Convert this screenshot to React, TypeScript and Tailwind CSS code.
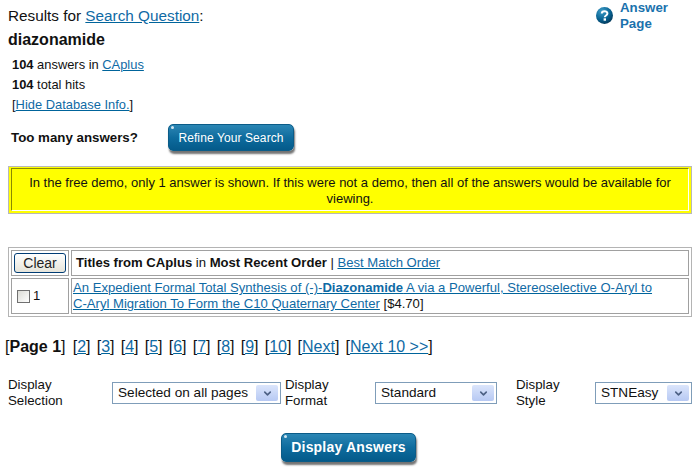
import { ChevronDown } from 'lucide-react'

const linkCls = 'text-[#0f6aa5] underline decoration-[#00649b]'

function GlossyButton({ label, cls }: { label: string; cls: string }) {
  return (
    <div
      className={`relative flex items-center justify-center rounded-[5px] border border-[#0b5c88] bg-gradient-to-b from-[#2a86b4] via-[#0e6c9e] to-[#045a8a] text-white shadow-[1px_3px_2px_rgba(0,0,0,0.55)] ${cls}`}
    >
      <span className="absolute left-[2px] top-[1px] h-[3px] w-[3px] rounded-full bg-white/80" />
      {label}
    </div>
  )
}

function FakeSelect({ value, cls }: { value: string; cls: string }) {
  return (
    <div
      className={`mt-[6px] flex h-[22px] items-center justify-between border border-[#7f9db9] bg-white pl-[5px] pr-[2px] text-[13.6px] text-[#111] ${cls}`}
    >
      <span>{value}</span>
      <span className="flex h-[16px] w-[22px] items-center justify-center rounded-[2px] bg-gradient-to-b from-[#dbe5fb] to-[#b7c9f3]">
        <ChevronDown size={11} strokeWidth={3.5} className="text-[#4d6185]" />
      </span>
    </div>
  )
}

export default function App() {
  return (
    <div className="h-[467px] w-[698px] overflow-hidden bg-white font-['Liberation_Sans',Arial,sans-serif] text-[#111]">
      <div className="flex justify-between pl-2 pr-[10px]">
        <div className="pt-[6px]">
          <div className="text-[15.3px] leading-[20px]">
            Results for <a className={linkCls}>Search Question</a>:
          </div>
          <div className="mt-[4px] text-[16px] font-bold leading-[20px]">diazonamide</div>
          <div className="mt-[5px] pl-[4px] text-[12.9px] leading-[20px]">
            <div>
              <b>104</b> answers in <a className={linkCls}>CAplus</a>
            </div>
            <div>
              <b>104</b> total hits
            </div>
            <div>
              [<a className={linkCls}>Hide Database Info.</a>]
            </div>
          </div>
        </div>
        <div className="flex w-[92px] items-start gap-[7px]">
          <svg width="17" height="17" viewBox="0 0 17 17" className="mt-[7px] flex-none">
            <defs>
              <radialGradient id="q" cx="35%" cy="25%" r="85%">
                <stop offset="0%" stopColor="#3d9cc8" />
                <stop offset="60%" stopColor="#07608f" />
                <stop offset="100%" stopColor="#03304e" />
              </radialGradient>
            </defs>
            <circle cx="8.5" cy="8.5" r="8.5" fill="url(#q)" />
            <path d="M5.8 6.6c0-3.2 5.6-3.2 5.6-.1 0 2-2.6 1.9-2.6 3.7" fill="none" stroke="#fff" strokeWidth="2" />
            <rect x="7.6" y="11.3" width="2.4" height="2.4" fill="#fff" />
          </svg>
          <div className="text-[13.3px] font-bold leading-[16px] text-[#1b72ad]">
            Answer
            <br />
            Page
          </div>
        </div>
      </div>

      <div className="mt-[9px] flex items-center pl-[11px]">
        <b className="w-[157px] text-[13.3px] leading-[16px]">Too many answers?</b>
        <GlossyButton label="Refine Your Search" cls="h-[27px] w-[126px] text-[12px] tracking-[0.1px]" />
      </div>

      <div className="ml-2 mr-[6px] mt-[15px] border border-[#b8b8b8] bg-[#ffff00] px-[2px] pb-[2px] pt-[1px]">
        <div className="border border-b-white border-l-[#8a8a00] border-r-white border-t-[#8a8a00] px-2 pb-[3px] pt-[6px] text-center text-[13px] leading-[16px] text-[#111]">
          In the free demo, only 1 answer is shown. If this were not a demo, then all of the answers would be available for viewing.
        </div>
      </div>

      <div className="ml-2 mr-[6px] mt-[33px] grid grid-cols-[58px_1fr] gap-[2px] border border-[#b4b4b4] p-[2px] text-[13.1px]">
        <div className="flex h-[26px] items-center justify-center border border-[#a0a0a0]">
          <div className="flex h-[20px] w-[52px] items-center justify-center rounded-[3px] border border-[#003c74] bg-gradient-to-b from-white to-[#e6e4da] text-[14px] text-[#222]">
            Clear
          </div>
        </div>
        <div className="flex h-[26px] items-center border border-[#a0a0a0] pl-[4px]">
          <span>
            <b>Titles from CAplus</b> in <b>Most Recent Order</b> | <a className={linkCls}>Best Match Order</a>
          </span>
        </div>
        <div className="flex h-[36px] items-center border border-[#a0a0a0] pl-[5px]">
          <span className="mr-[3px] h-[13px] w-[13px] border border-[#707070] bg-gradient-to-br from-[#dcdcd6] to-white" />
          1
        </div>
        <div className="flex h-[36px] items-center border border-[#a0a0a0] pl-[1px] leading-[16px]">
          <span>
            <a className={linkCls}>
              An Expedient Formal Total Synthesis of (-)-<b>Diazonamide</b> A via a Powerful, Stereoselective O-Aryl to{' '}
              <span className="whitespace-nowrap">C-Aryl</span> Migration To Form the C10 Quaternary Center
            </a>{' '}
            [$4.70]
          </span>
        </div>
      </div>

      <div className="mt-[20px] flex gap-[6.2px] pl-[5px] text-[16px] leading-[20px]">
        <span className="mr-[1px]">
          [<b>Page 1</b>]
        </span>
        {['2', '3', '4', '5', '6', '7', '8', '9', '10', 'Next', 'Next 10 >>'].map((p) => (
          <span key={p}>
            [<a className={linkCls}>{p}</a>]
          </span>
        ))}
      </div>

      <div className="mt-[19px] flex items-start pl-2 text-[13.3px] leading-[16px]">
        <div className="w-[104px] pt-[1px]">
          Display
          <br />
          Selection
        </div>
        <FakeSelect value="Selected on all pages" cls="w-[169px]" />
        <div className="ml-[4px] w-[90px] pt-[1px]">
          Display
          <br />
          Format
        </div>
        <FakeSelect value="Standard" cls="w-[122px]" />
        <div className="ml-[19px] w-[79px] pt-[1px]">
          Display
          <br />
          Style
        </div>
        <FakeSelect value="STNEasy" cls="w-[97px]" />
      </div>

      <div className="mt-[24px] flex justify-center pr-[1px]">
        <GlossyButton label="Display Answers" cls="h-[29px] w-[135px] text-[14px] font-bold tracking-[0.2px]" />
      </div>
    </div>
  )
}
